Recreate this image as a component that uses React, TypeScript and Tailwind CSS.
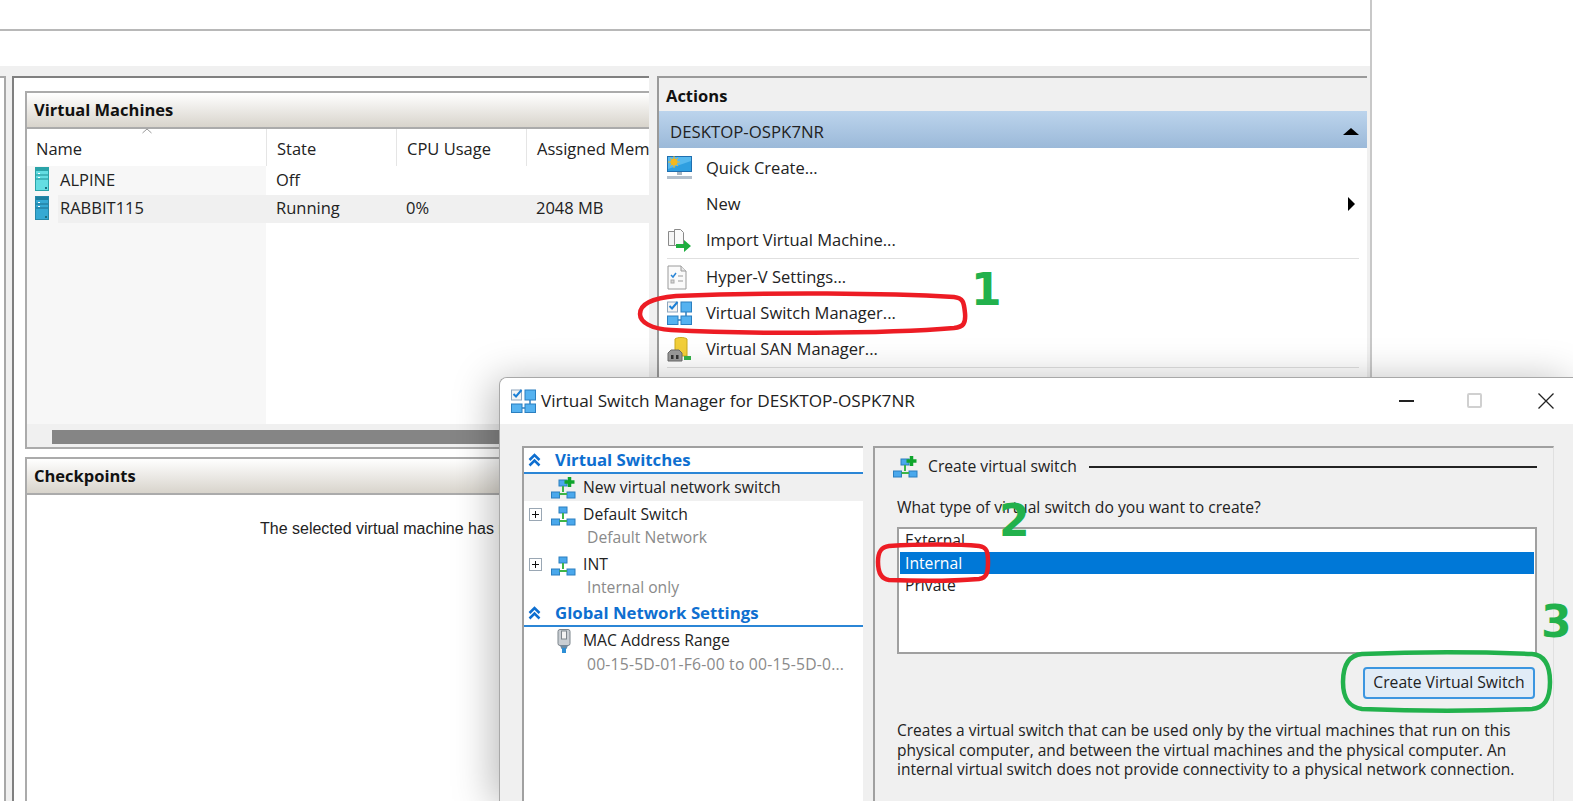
import React from 'react'

// small drawn icons, Hyper-V style
const SwitchMgrIcon = () => (
  <svg width="25" height="24" viewBox="0 0 25 24">
    <rect x="0.500" y="1" width="10" height="10" fill="#f4f4f4" stroke="#8fa6bd" />
    <path d="M2.5 5l2.5 2.5L10.500 1" fill="none" stroke="#1b7fd6" strokeWidth="2" />
    <rect x="14" y="1" width="10.500" height="10" fill="#55b2f0" stroke="#2b7fc0" />
    <rect x="0.500" y="15" width="10.500" height="8.500" fill="#55b2f0" stroke="#2b7fc0" />
    <rect x="14" y="15" width="10.500" height="8.500" fill="#55b2f0" stroke="#2b7fc0" />
    <path d="M19 11v4M11 19h3" stroke="#2b7fc0" strokeWidth="1.500" />
  </svg>
)

const NetIcon = ({ plus }: { plus?: boolean }) => (
  <svg width="25" height="22" viewBox="0 0 25 22">
    <rect x="8" y="3" width="8" height="6" fill="#4aa8ec" stroke="#2b7fc0" />
    <rect x="0.500" y="15" width="8" height="6" fill="#4aa8ec" stroke="#2b7fc0" />
    <rect x="16" y="15" width="8" height="6" fill="#4aa8ec" stroke="#2b7fc0" />
    <path d="M12 9v6M8.500 17h7.500" stroke="#3db54a" strokeWidth="2" fill="none" />
    {plus && <path d="M18.500 0v10M13.500 5h10" stroke="#0fa52c" strokeWidth="3.500" />}
  </svg>
)

const ServerIcon = ({ on }: { on?: boolean }) => (
  <svg width="14" height="24" viewBox="0 0 14 24">
    <rect x="0.500" y="0.500" width="13" height="23" fill={on ? '#35a9d3' : '#63dde2'} stroke={on ? '#2587a8' : '#2aa3a8'} />
    <rect x="1" y="1" width="12" height="3" fill={on ? '#1d7f9f' : '#2aa3a8'} />
    <path d="M1 8h12M1 12h12" stroke={on ? '#1d6f8c' : '#1f8f94'} />
    <rect x="3" y="6" width="2" height="1" fill="#fff" />
    <rect x="3" y="10" width="2" height="1" fill="#fff" />
    <rect x="10" y="20" width="2" height="2" fill="#1f6f80" />
  </svg>
)

const MonitorIcon = () => (
  <svg width="25" height="24" viewBox="0 0 25 24">
    <rect x="0.500" y="0.500" width="24" height="15" fill="#2f9fe0" stroke="#1f6fb0" />
    <path d="M1 1h23v4L1 13z" fill="#57b9ee" />
    <circle cx="7" cy="6" r="3.500" fill="#f5b81f" />
    <path d="M7 0v12M1 6h12M3 2l8 8M11 2l-8 8" stroke="#f5b81f" strokeWidth="1" />
    <path d="M10 16v3h5v-3z" fill="#a9b6c2" />
    <rect x="0" y="20" width="25" height="3" fill="#b4c0cc" />
  </svg>
)

const ImportIcon = () => (
  <svg width="24" height="25" viewBox="0 0 24 25">
    <path d="M1.500 3.500h6l3 3v11h-9z" fill="#f5f5f5" stroke="#8a8a8a" />
    <path d="M7.500 1.500h6l3 3v13h-9z" fill="#fafafa" stroke="#8a8a8a" />
    <path d="M9 16h8v-4l7 6-7 6v-4H9z" fill="#1fae3f" />
  </svg>
)

const SettingsIcon = () => (
  <svg width="20" height="25" viewBox="0 0 20 25">
    <path d="M1 1h13l5 5v18H1z" fill="#fafafa" stroke="#9a9a9a" />
    <path d="M14 1v5h5" fill="#e8e8e8" stroke="#9a9a9a" />
    <path d="M4 10l2 2 3-4" fill="none" stroke="#2b86d6" strokeWidth="1.500" />
    <path d="M11 11h5M11 16h5" stroke="#9a9a9a" />
    <rect x="4" y="15" width="3" height="3" fill="#d8d8d8" stroke="#a8a8a8" />
  </svg>
)

const SanIcon = () => (
  <svg width="25" height="25" viewBox="0 0 25 25">
    <path d="M8 2c2-2 10-2 12 0v17H8z" fill="#f2cf3a" stroke="#c9a91d" />
    <path d="M1 16l3-3h8l3 3v8H1z" fill="#9a9a9a" stroke="#6a6a6a" />
    <rect x="4" y="18" width="2.500" height="4" fill="#333" />
    <rect x="9" y="18" width="2.500" height="4" fill="#333" />
    <rect x="17" y="19" width="7" height="4" fill="#35b24a" />
  </svg>
)

const PlugIcon = () => (
  <svg width="14" height="24" viewBox="0 0 14 24">
    <rect x="1" y="0.500" width="12" height="16" rx="2" fill="#c9ced3" stroke="#7d858c" />
    <rect x="4.500" y="2" width="5" height="8" fill="#f2f2f2" stroke="#7d858c" />
    <path d="M3 16.500h8L9.500 20h-5z" fill="#6c8aa3" />
    <rect x="5" y="19" width="4" height="5" fill="#2d8fd6" />
  </svg>
)

const CollapseIcon = () => (
  <svg width="13" height="14" viewBox="0 0 13 14">
    <path d="M1.500 7L6.500 2l5 5M1.500 12.500l5-5 5 5" fill="none" stroke="#0e6fd0" strokeWidth="2.500" />
  </svg>
)

const Expander = () => (
  <svg width="14" height="14" viewBox="0 0 14 14">
    <rect x="0.500" y="0.500" width="12" height="12" fill="#fff" stroke="#9aa7b4" />
    <path d="M3 6.500h7M6.500 3v7" stroke="#111" />
  </svg>
)

const paneHeader = 'h-[38px] flex items-center pl-[7px] shrink-0 border-t-2 border-b-2 border-[#ababab] bg-gradient-to-b from-white to-[#d8d4cc] font-bold text-[16.5px] text-[#111] font-["Open_Sans",sans-serif]'

function VmRow({ name, state, cpu, mem, on }: { name: string; state: string; cpu?: string; mem?: string; on?: boolean }) {
  return (
    <div className={`grid grid-cols-[239px_130px_130px_1fr] h-[28.5px] items-center ${on ? 'bg-[#f0f0f0]' : ''}`}>
      <div className="h-full flex items-center relative">
        <div className={`h-full flex-1 flex items-center pl-[31px] ${on ? '' : 'bg-[#f7f7f7]'}`}>
          <div className="w-[31px] h-full absolute left-0 bg-[#f7f7f7]" />
          <div className="absolute left-[8px] top-[1px]"><ServerIcon on={on} /></div>
          <span className="pl-[2px] relative">{name}</span>
        </div>
      </div>
      <span className="pl-[10px]">{state}</span>
      <span className="pl-[10px]">{cpu}</span>
      <span className="pl-[10px]">{mem}</span>
    </div>
  )
}

function ActionRow({ icon, label, arrow }: { icon?: React.ReactNode; label: string; arrow?: boolean }) {
  return (
    <div className="h-[36px] flex items-center relative shrink-0">
      <div className="w-[47px] pl-[8px] flex items-center">{icon}</div>
      <span>{label}</span>
      {arrow && <div className="absolute right-[4px] top-[11px] w-0 h-0 border-y-[7px] border-y-transparent border-l-[7px] border-l-black" />}
    </div>
  )
}

function SwitchRow({ icon, label, sub, expander }: { icon: React.ReactNode; label: string; sub?: string; expander?: boolean }) {
  return (
    <div className="shrink-0">
      <div className="h-[27px] flex items-center pl-[5px]">
        <div className="w-[22px]">{expander && <Expander />}</div>
        <div className="w-[32px] flex items-center">{icon}</div>
        <span>{label}</span>
      </div>
      {sub && <div className="h-[23px] pl-[63px] pb-[4px] flex items-center text-[#8a8a8a]">{sub}</div>}
    </div>
  )
}

function SectionHead({ label }: { label: string }) {
  return (
    <div className="h-[26px] flex items-center pl-[4px] border-b-2 border-[#2b86d6] shrink-0 text-[#0e6fd0] font-bold text-[16.8px]">
      <div className="w-[27px]"><CollapseIcon /></div>
      <span>{label}</span>
    </div>
  )
}

export default function App() {
  return (
    <div className='relative w-[1573px] h-[801px] overflow-hidden bg-white text-[16.500px] text-[#222] font-["Open_Sans",sans-serif]'>
      {/* HYPER-V MANAGER */}
      <div className="w-[1372px] h-full flex flex-col border-r-2 border-[#c8c8c8]">
        <div className="h-[31px] border-b-2 border-[#b8b8b8] shrink-0" />
        <div className="h-[35px] shrink-0" />
        <div className="flex-1 flex bg-[#f0f0f0] pt-[10px] min-h-0">
          <div className="w-[6px] bg-white border-r-2 border-t-2 border-[#a8a8a8] shrink-0" />

          {/* painel central */}
          <div className="ml-[6px] w-[637px] shrink-0 bg-white border-l-2 border-t-2 border-[#808080] pl-[11px] pt-[13px] flex flex-col overflow-hidden">
            <div className="h-[358px] shrink-0 border-l-2 border-b-2 border-[#ababab] flex flex-col">
              <div className={paneHeader}>Virtual Machines</div>
              <div className="grid grid-cols-[239px_130px_130px_1fr] h-[37px] shrink-0 relative">
                <span className="absolute left-[115px] top-[-1px] text-[#999]">
                  <svg width="10" height="6" viewBox="0 0 10 6"><path d="M0.500 5L5 1l4.500 4" fill="none" stroke="#999" /></svg>
                </span>
                <span className="pl-[9px] pt-[8px]">Name</span>
                <span className="pl-[10px] pt-[8px] border-l border-[#e5e5e5]">State</span>
                <span className="pl-[10px] pt-[8px] border-l border-[#e5e5e5]">CPU Usage</span>
                <span className="pl-[10px] pt-[8px] border-l border-[#e5e5e5] whitespace-nowrap">Assigned Memory</span>
              </div>
              <VmRow name="ALPINE" state="Off" />
              <VmRow name="RABBIT115" state="Running" cpu="0%" mem="2048 MB" on />
              <div className="flex-1 flex">
                <div className="w-[239px] bg-[#f7f7f7]" />
              </div>
              <div className="h-[23px] bg-[#f0f0f0] shrink-0 pl-[25px] pt-[6px]">
                <div className="h-[14px] bg-[#858585]" />
              </div>
            </div>
            <div className="mt-[8px] flex-1 border-l-2 border-[#ababab] flex flex-col">
              <div className={paneHeader}>Checkpoints</div>
              <div className='pl-[233px] pt-[22px] text-[16px] font-["Liberation_Sans",sans-serif] whitespace-nowrap'>The selected virtual machine has no checkpoints.</div>
            </div>
          </div>

          {/* painel de acoes */}
          <div className="ml-[8px] flex-1 mr-[3px] bg-white border-l-2 border-t-2 border-[#9a9a9a] flex flex-col">
            <div className="h-[33px] bg-[#f0f0f0] pl-[7px] pt-[3px] flex items-center font-bold text-[16.500px] text-[#111] shrink-0">Actions</div>
            <div className="h-[37px] shrink-0 bg-gradient-to-b from-[#bcd4ec] to-[#9bb9d9] pl-[11px] pr-[8px] pt-[4px] flex items-center justify-between text-[16.800px]">
              <span>DESKTOP-OSPK7NR</span>
              <div className="w-0 h-0 border-x-[8px] border-x-transparent border-b-[7px] border-b-black" />
            </div>
            <div className="pt-[2px] pr-[8px]">
              <ActionRow icon={<MonitorIcon />} label="Quick Create..." />
              <ActionRow label="New" arrow />
              <ActionRow icon={<ImportIcon />} label="Import Virtual Machine..." />
              <div className="h-px bg-[#e0e0e0] ml-[8px]" />
              <ActionRow icon={<SettingsIcon />} label="Hyper-V Settings..." />
              <ActionRow icon={<SwitchMgrIcon />} label="Virtual Switch Manager..." />
              <ActionRow icon={<SanIcon />} label="Virtual SAN Manager..." />
              <div className="h-px bg-[#e0e0e0] ml-[8px]" />
            </div>
          </div>
        </div>
      </div>

      {/* DIALOG */}
      <div className="absolute left-[499px] top-[377px] w-[1074px] h-[424px] rounded-tl-lg border-l border-t border-[#a8a8a8] bg-[#f0f0f0] flex flex-col shadow-[-6px_4px_40px_rgba(0,0,0,0.28)] overflow-hidden text-[15.700px]">
        <div className="h-[46px] bg-white shrink-0 flex items-center pl-[11px] relative">
          <SwitchMgrIcon />
          <span className="ml-[5px] text-[17.200px]">Virtual Switch Manager for DESKTOP-OSPK7NR</span>
          <div className="absolute left-[899px] top-[22px] w-[15px] h-[2px] bg-[#222]" />
          <div className="absolute left-[967px] top-[15px] w-[15px] h-[15px] border-2 border-[#d0d0d0] rounded-[2px]" />
          <svg className="absolute left-[1038px] top-[15px]" width="16" height="16" viewBox="0 0 16 16">
            <path d="M0.500 0.500l15 15M15.500 0.500l-15 15" stroke="#222" strokeWidth="1.300" />
          </svg>
        </div>
        <div className="flex-1 flex pl-[22px] pt-[22px] min-h-0">
          {/* lista esquerda */}
          <div className="w-[341px] shrink-0 bg-white border-l-2 border-t-2 border-[#a0a0a0] flex flex-col">
            <SectionHead label="Virtual Switches" />
            <div className="bg-[#f0f0f0]">
              <SwitchRow icon={<NetIcon plus />} label="New virtual network switch" />
            </div>
            <SwitchRow icon={<NetIcon />} label="Default Switch" sub="Default Network" expander />
            <SwitchRow icon={<NetIcon />} label="INT" sub="Internal only" expander />
            <SectionHead label="Global Network Settings" />
            <div>
              <div className="h-[27px] flex items-center pl-[33px]">
                <div className="w-[26px]"><PlugIcon /></div>
                <span>MAC Address Range</span>
              </div>
              <div className="h-[22px] pl-[63px] flex items-center text-[#8a8a8a] whitespace-nowrap tracking-[0.2px]">00-15-5D-01-F6-00 to 00-15-5D-0...</div>
            </div>
          </div>

          {/* painel direito */}
          <div className="ml-[10px] w-[681px] shrink-0 border-l-2 border-t-2 border-[#a0a0a0] border-r border-r-[#e0e0e0] pl-[22px] pr-[16px] pt-[7px] flex flex-col">
            <div className="h-[24px] flex items-center">
              <div className="-ml-[4px] w-[35px]"><NetIcon plus /></div>
              <span className="whitespace-nowrap">Create virtual switch</span>
              <div className="ml-[12px] flex-1 h-[2px] bg-[#222]" />
            </div>
            <div className="mt-[17px] h-[24px] flex items-center whitespace-nowrap">What type of virtual switch do you want to create?</div>
            <div className="mt-[7px] h-[127px] bg-white border-2 border-[#a0a0a0] px-[1px] pt-[1px] shrink-0">
              <div className="h-[22px] flex items-center pl-[5px]">External</div>
              <div className="h-[22px] flex items-center pl-[5px] pt-[1px] bg-[#0078d7] text-white">Internal</div>
              <div className="h-[22px] flex items-center pl-[5px] pt-[2px]">Private</div>
            </div>
            <div className="mt-[13px] flex justify-end pr-[2px]">
              <div className="h-[32px] w-[172px] flex items-center justify-center bg-[#e1ecf7] border-2 border-[#3c96e0] rounded-[4px]">Create Virtual Switch</div>
            </div>
            <div className="mt-[22px] text-[15.500px] leading-[19.500px]">
              <div className="whitespace-nowrap">Creates a virtual switch that can be used only by the virtual machines that run on this</div>
              <div className="whitespace-nowrap">physical computer, and between the virtual machines and the physical computer. An</div>
              <div className="whitespace-nowrap">internal virtual switch does not provide connectivity to a physical network connection.</div>
            </div>
          </div>
        </div>
      </div>

      {/* ANOTACOES */}
      <svg className="absolute left-[636px] top-[290px]" width="335" height="46" viewBox="0 0 335 46">
        <path d="M40 6C140 2 250 3 318 7c9 1 10 5 11 16s-2 14-11 15c-70 6-210 6-283 2C15 39 4 32 4 24 4 15 15 8 40 6z" fill="none" stroke="#ed1c24" strokeWidth="4.500" />
      </svg>
      <svg className="absolute left-[875px] top-[542px]" width="118" height="42" viewBox="0 0 118 42">
        <path d="M14 4c30-2 70-2 90 0 8 1 9 6 9 16s-1 16-9 17c-25 2-65 2-90 1-8-1-11-8-11-18S6 5 14 4z" fill="none" stroke="#ed1c24" strokeWidth="4.500" />
      </svg>
      <svg className="absolute left-[1340px] top-[650px]" width="214" height="63" viewBox="0 0 214 63">
        <path d="M22 4c50-2 120-2 170 0 12 1 18 10 18 28s-6 26-18 27c-50 2-120 2-170 0-12-2-19-9-19-27S10 5 22 4z" fill="none" stroke="#22b14c" strokeWidth="4.500" />
      </svg>
      <span className='absolute left-[971px] top-[264px] text-[44px] leading-[52px] font-bold text-[#22b14c] font-["DejaVu_Sans",sans-serif]'>1</span>
      <span className='absolute left-[999px] top-[495px] text-[44px] leading-[52px] font-bold text-[#22b14c] font-["DejaVu_Sans",sans-serif]'>2</span>
      <span className='absolute left-[1541px] top-[596px] text-[44px] leading-[52px] font-bold text-[#22b14c] font-["DejaVu_Sans",sans-serif]'>3</span>
    </div>
  )
}
